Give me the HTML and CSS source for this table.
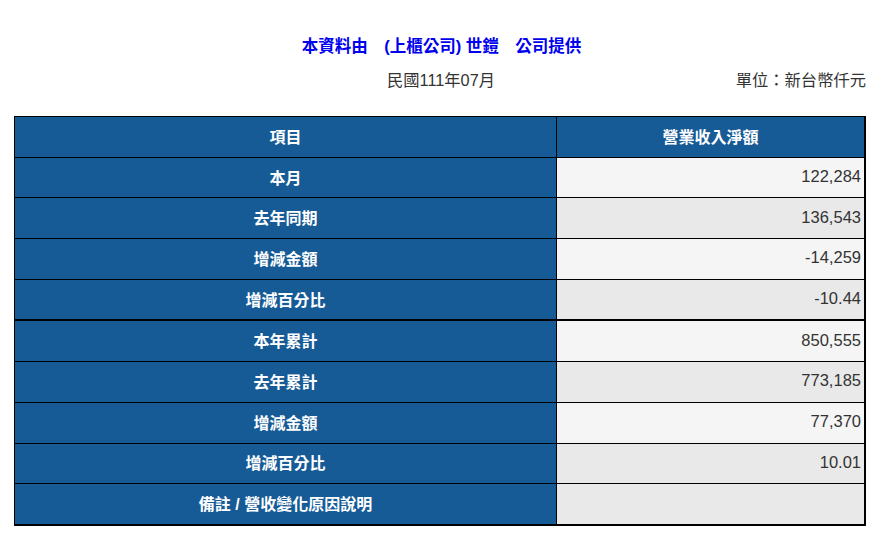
FILE: index.html
```html
<!DOCTYPE html>
<html lang="zh-Hant">
<head>
<meta charset="utf-8">
<link rel="stylesheet" href="styles.css">
</head>
<body>
<div class="page">
  <div class="title">本資料由　(上櫃公司) 世鎧　公司提供</div>
  <div class="subline">
    <span class="date">民國111年07月</span>
    <span class="unit">單位：新台幣仟元</span>
  </div>
  <table class="report">
    <tr class="head"><th>項目</th><th>營業收入淨額</th></tr>
    <tr class="odd"><th>本月</th><td>122,284</td></tr>
    <tr class="even"><th>去年同期</th><td>136,543</td></tr>
    <tr class="odd"><th>增減金額</th><td>-14,259</td></tr>
    <tr class="even"><th>增減百分比</th><td>-10.44</td></tr>
    <tr class="odd sep"><th>本年累計</th><td>850,555</td></tr>
    <tr class="even"><th>去年累計</th><td>773,185</td></tr>
    <tr class="odd"><th>增減金額</th><td>77,370</td></tr>
    <tr class="even"><th>增減百分比</th><td>10.01</td></tr>
    <tr class="even"><th>備註 / 營收變化原因說明</th><td></td></tr>
  </table>
</div>
</body>
</html>
```
FILE: styles.css
```css
html, body {
  margin: 0;
  padding: 0;
  background: #ffffff;
}
body {
  font-family: "Liberation Sans", Arial, "Noto Sans CJK TC", sans-serif;
}
.page {
  padding: 36px 17px 0 14px;
}
.title {
  text-align: center;
  color: #0000ee;
  font-weight: bold;
  font-size: 16.5px;
  line-height: 20px;
  padding-left: 3px;
}
.subline {
  position: relative;
  height: 20px;
  margin-top: 14px;
  font-size: 16.3px;
  line-height: 20px;
  color: #333333;
  text-align: center;
}
.date {
  display: inline-block;
  padding-left: 2px;
}
.unit {
  position: absolute;
  right: 0;
  top: 0;
}
.report {
  margin-top: 26px;
  width: 852px;
  border-collapse: collapse;
  border-right: 2px solid #000;
  border-bottom: 2px solid #000;
  font-size: 16px;
}
.report th, .report td {
  border: 1px solid #000;
  height: 37.7px;
  padding: 0 3px 2px 3px;
}
.report th {
  background: #175b96;
  color: #ffffff;
  font-weight: bold;
  text-align: center;
  width: 535px;
  font-size: 16px;
}
.report td {
  text-align: right;
  color: #333333;
  font-size: 16.5px;
}
.report .head th:last-child {
  width: auto;
}
.report tr.odd td {
  background: #f5f5f5;
}
.report tr.even td {
  background: #e9e9e9;
}
.report tr.sep th, .report tr.sep td {
  border-top: 2px solid #000;
}
```
